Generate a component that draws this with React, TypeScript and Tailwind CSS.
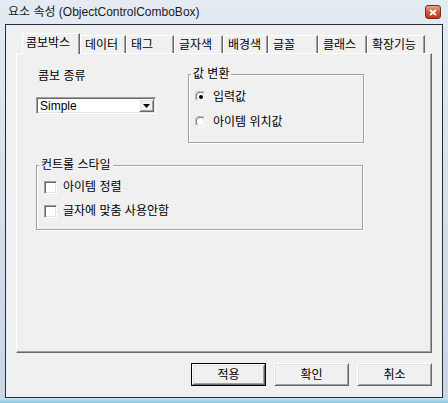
const raised =
  'border border-t-white border-l-white border-r-[#696969] border-b-[#696969] shadow-[inset_1px_1px_0_#e3e3e3,inset_-1px_-1px_0_#a0a0a0]';
const sunken =
  'border border-t-[#a0a0a0] border-l-[#a0a0a0] border-r-white border-b-white shadow-[inset_1px_1px_0_#696969,inset_-1px_-1px_0_#e3e3e3]';

const tabs = [
  { label: '콤보박스', w: 'w-[58px]', active: true },
  { label: '데이터', w: 'w-[46px]' },
  { label: '태그', w: 'w-[48px]' },
  { label: '글자색', w: 'w-[49px]' },
  { label: '배경색', w: 'w-[45px]' },
  { label: '글꼴', w: 'w-[50px]' },
  { label: '클래스', w: 'w-[49px]' },
  { label: '확장기능', w: 'w-[58px]' },
];

function Radio({ checked }: { checked?: boolean }) {
  return (
    <svg width="12" height="12" viewBox="0 0 12 12" className="shrink-0">
      <path d="M1.5 9.5 A5.5 5.5 0 0 1 9.5 1.5" fill="none" stroke="#a0a0a0" />
      <path d="M9.5 1.5 A5.5 5.5 0 0 1 1.5 9.5" fill="none" stroke="#ffffff" />
      <circle cx="6" cy="6" r="4.5" fill="#fff" />
      <path d="M2.5 8.5 A4.2 4.2 0 0 1 8.5 2.5" fill="none" stroke="#696969" />
      <path d="M8.5 2.5 A4.2 4.2 0 0 1 2.5 8.5" fill="none" stroke="#e3e3e3" />
      {checked && <circle cx="6" cy="6" r="2" fill="#000" />}
    </svg>
  );
}

function Check() {
  return <span className={`w-[13px] h-[13px] shrink-0 bg-white ${sunken}`} />;
}

function Group({ title, className, children }: { title: string; className: string; children: React.ReactNode }) {
  return (
    <fieldset
      className={`border border-[#a0a0a0] pl-[2px] shadow-[inset_1px_1px_0_#fff,1px_1px_0_#fff] ${className}`}
    >
      <legend className="px-[2px] leading-[14px] bg-[#f0f0f0]">{title}</legend>
      {children}
    </fieldset>
  );
}

export default function App() {
  return (
    <div
      className="w-[448px] h-[403px] flex flex-col bg-gradient-to-b from-[#e4ebf3] via-[#d6e0ea] to-[#c7d5e4] text-[12px] text-black"
      style={{ fontFamily: '"Liberation Sans", "Noto Sans CJK KR", sans-serif' }}
    >
      {/* title bar */}
      <div className="h-[24px] flex items-center pl-[8px] pr-[7px]">
        <span className="flex-1 leading-[14px] text-[#1a1a1a]">요소 속성 (ObjectControlComboBox)</span>
        <span className="w-[16px] h-[14px] rounded-[3px] border border-[#7a2a1c] bg-gradient-to-b from-[#e9a391] via-[#d2543a] to-[#c0391f] flex items-center justify-center">
          <svg width="8" height="7" viewBox="0 0 8 7">
            <path d="M1 1 L7 6 M7 1 L1 6" stroke="#fff" strokeWidth="1.8" />
          </svg>
        </span>
      </div>

      {/* client area */}
      <div className="mx-[5px] h-[374px] border border-[#1f2f3f] bg-[#f0f0f0] flex flex-col">
        <div className="ml-[10px] pl-[6px] pt-[8px] flex items-end h-[28px]">
          {tabs.map((t) =>
            t.active ? (
              <div
                key={t.label}
                className={`${t.w} h-[21px] -mb-[1px] relative z-10 bg-[#f0f0f0] border-t border-l border-white border-r border-r-[#696969] shadow-[inset_-1px_0_0_#a0a0a0] pl-[3px] pt-[2px] leading-[14px]`}
              >
                {t.label}
              </div>
            ) : (
              <div
                key={t.label}
                className={`${t.w} h-[18px] border-t border-l border-white border-r border-r-[#696969] shadow-[inset_-1px_0_0_#a0a0a0] pl-[4px] pt-[2px] leading-[14px]`}
              >
                {t.label}
              </div>
            ),
          )}
        </div>

        <div
          className="ml-[10px] w-[416px] h-[300px] border-t border-l border-white border-r border-b border-r-[#696969] border-b-[#696969] shadow-[inset_-1px_-1px_0_#a0a0a0] pl-[19px] pt-[13px] flex flex-col"
        >
          <div className="flex items-start">
            <div className="mt-[2px] w-[120px] flex flex-col">
              <span className="leading-[14px] pl-[2px]">콤보 종류</span>
              <div className={`mt-[14px] h-[17px] bg-white flex items-center ${sunken}`}>
                <span className="flex-1 pl-[3px] leading-[14px]">Simple</span>
                <span className={`w-[15px] h-[13px] mr-[1px] bg-[#f0f0f0] flex items-center justify-center ${raised}`}>
                  <svg width="7" height="4" viewBox="0 0 7 4">
                    <path d="M0 0 H7 L3.5 4 Z" fill="#000" />
                  </svg>
                </span>
              </div>
            </div>

            <Group title="값 변환" className="ml-[32px] w-[176px] h-[76px]">
              <div className="flex flex-col ml-[4px] mt-[9px] gap-[11px]">
                <label className="flex items-center h-[14px]">
                  <Radio checked />
                  <span className="ml-[6px] leading-[14px]">입력값</span>
                </label>
                <label className="flex items-center h-[14px]">
                  <Radio />
                  <span className="ml-[6px] leading-[14px]">아이템 위치값</span>
                </label>
              </div>
            </Group>
          </div>

          <Group title="컨트롤 스타일" className="mt-[15px] w-[327px] h-[72px]">
            <div className="flex flex-col ml-[5px] mt-[8px] gap-[10px]">
              <label className="flex items-center h-[14px]">
                <Check />
                <span className="ml-[6px] leading-[14px]">아이템 정렬</span>
              </label>
              <label className="flex items-center h-[14px]">
                <Check />
                <span className="ml-[6px] leading-[14px]">글자에 맞춤 사용안함</span>
              </label>
            </div>
          </Group>
        </div>

        <div className="mt-[10px] pr-[10px] flex justify-end gap-[8px]">
          <button className="w-[75px] h-[23px] border border-black">
            <span className={`w-full h-full flex items-center justify-center bg-[#f0f0f0] ${raised}`}>적용</span>
          </button>
          <button className={`w-[75px] h-[23px] bg-[#f0f0f0] flex items-center justify-center ${raised}`}>확인</button>
          <button className={`w-[75px] h-[23px] bg-[#f0f0f0] flex items-center justify-center ${raised}`}>취소</button>
        </div>
      </div>

      {/* bottom frame edge */}
      <div className="h-[5px] bg-gradient-to-b from-[#d2e2ee] to-[#7cc6df]" />
    </div>
  );
}
